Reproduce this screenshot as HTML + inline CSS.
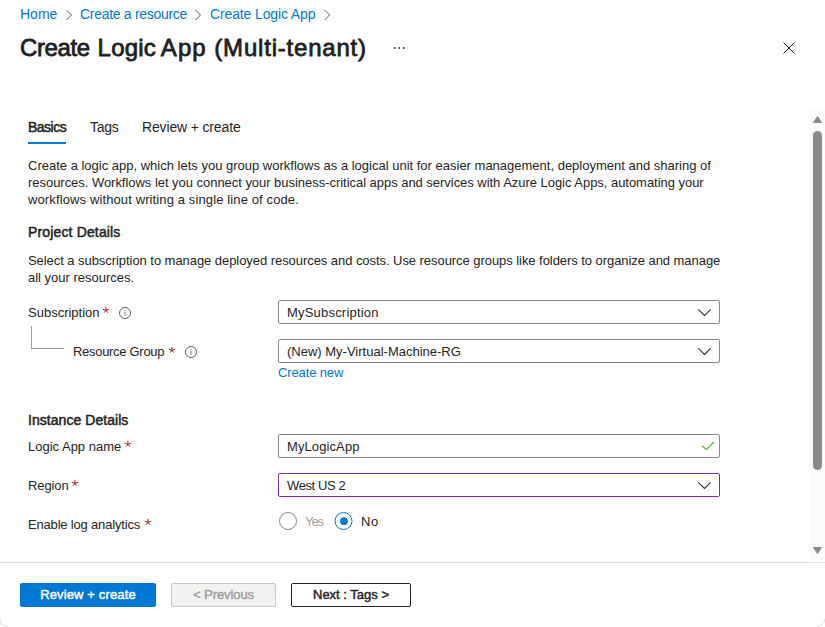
<!DOCTYPE html>
<html><head><meta charset="utf-8">
<style>
*{margin:0;padding:0;box-sizing:border-box}
html,body{width:825px;height:627px;overflow:hidden;background:#fff}
body{font-family:"Liberation Sans",sans-serif;color:#252423;position:relative}
.a{position:absolute;white-space:nowrap}
svg.a{overflow:visible}
.bc{font-size:14px;color:#0078d4;top:5px;line-height:18px}
.title{top:33px;font-size:24px;-webkit-text-stroke:0.8px #201f1e;color:#201f1e;line-height:30px;letter-spacing:0.47px}
.tab{top:118px;font-size:14px;line-height:18px;color:#252423}
.p{font-size:13px;line-height:17px;color:#252423}
.h{font-size:14px;-webkit-text-stroke:0.5px #252423;color:#252423;line-height:18px;letter-spacing:0.15px}
.lbl{font-size:13px;line-height:17px;color:#252423}
.box{position:absolute;left:278px;width:442px;height:24px;border:1px solid #8a8886;border-radius:2px;background:#fff}
.box span{position:absolute;left:8px;top:3px;font-size:13px;line-height:17px;color:#252423;white-space:nowrap}
.btn{position:absolute;top:583px;height:24px;border-radius:2px;font-size:13px;-webkit-text-stroke:0.45px currentColor;text-align:center;line-height:24px;white-space:nowrap}
</style></head><body>
<!-- breadcrumb -->
<div class="a bc" style="left:20px">Home</div>
<svg class="a" style="left:0;top:0" width="1" height="1"><path d="M66.5 10 L71.5 15 L66.5 20" fill="none" stroke="#605e5c" stroke-width="1"/></svg>
<div class="a bc" style="left:80px;letter-spacing:-0.3px">Create a resource</div>
<svg class="a" style="left:0;top:0" width="1" height="1"><path d="M195.5 10 L200.5 15 L195.5 20" fill="none" stroke="#605e5c" stroke-width="1"/></svg>
<div class="a bc" style="left:210px;letter-spacing:-0.13px">Create Logic App</div>
<svg class="a" style="left:0;top:0" width="1" height="1"><path d="M324.5 10 L329.5 15 L324.5 20" fill="none" stroke="#605e5c" stroke-width="1"/></svg>

<div class="a title" style="left:20px;letter-spacing:-0.4px">Create</div><div class="a title" style="left:97.6px;letter-spacing:0.2px">Logic</div><div class="a title" style="left:160.8px;letter-spacing:1.1px">App</div><div class="a title" style="left:214.3px;letter-spacing:0.8px">(Multi-tenant)</div>
<svg class="a" style="left:0;top:0" width="1" height="1"><g fill="#3b3a39"><rect x="394" y="47" width="1.4" height="2"/><rect x="398.5" y="47" width="1.4" height="2"/><rect x="403" y="47" width="1.4" height="2"/></g></svg>
<svg class="a" style="left:0;top:0" width="1" height="1"><path d="M783.5 42.5 L794.5 53.5 M794.5 42.5 L783.5 53.5" fill="none" stroke="#252423" stroke-width="1"/></svg>

<!-- tabs -->
<div class="a tab" style="left:28px;-webkit-text-stroke:0.5px #252423;letter-spacing:-0.5px">Basics</div>
<div class="a" style="left:28px;top:142px;width:38px;height:2px;background:#0078d4"></div>
<div class="a tab" style="left:90px;letter-spacing:-0.3px">Tags</div>
<div class="a tab" style="left:142px;letter-spacing:-0.15px">Review + create</div>

<!-- scrollbar -->
<div class="a" style="left:810px;top:108px;width:15px;height:453px;background:#fbfbfb"></div>
<svg class="a" style="left:0;top:0" width="1" height="1"><path d="M817.5 116.5 L821.5 122.5 L813.5 122.5 Z" fill="#8a8a8a" stroke="#8a8a8a" stroke-width="1" stroke-linejoin="round"/>
<path d="M813.5 547.5 L821.5 547.5 L817.5 553.5 Z" fill="#8a8a8a" stroke="#8a8a8a" stroke-width="1" stroke-linejoin="round"/></svg>
<div class="a" style="left:813px;top:131px;width:9px;height:339px;border-radius:4.5px;background:#8a8a8a"></div>

<!-- description -->
<div class="a p" style="left:28px;top:157px">Create a logic app, which lets you group workflows as a logical unit for easier management, deployment and sharing of</div>
<div class="a p" style="left:28px;top:174px;letter-spacing:-0.035px">resources. Workflows let you connect your business-critical apps and services with Azure Logic Apps, automating your</div>
<div class="a p" style="left:28px;top:191px;letter-spacing:0.12px">workflows without writing a single line of code.</div>

<div class="a h" style="left:28px;top:223px">Project Details</div>
<div class="a p" style="left:28px;top:252px;letter-spacing:-0.056px">Select a subscription to manage deployed resources and costs. Use resource groups like folders to organize and manage</div>
<div class="a p" style="left:28px;top:269px">all your resources.</div>

<!-- subscription -->
<div class="a lbl" style="left:28px;top:304px">Subscription</div>
<svg class="a" style="left:0;top:0" width="1" height="1"><g stroke="#a4262c" stroke-width="1" stroke-linecap="round"><line x1="105.9" y1="310.3" x2="105.9" y2="307.2"/><line x1="105.9" y1="310.3" x2="103.0" y2="309.4"/><line x1="105.9" y1="310.3" x2="108.8" y2="309.4"/><line x1="105.9" y1="310.3" x2="104.3" y2="312.4"/><line x1="105.9" y1="310.3" x2="107.5" y2="312.4"/></g></svg>
<svg class="a" style="left:0;top:0" width="1" height="1"><circle cx="125" cy="313" r="5.5" fill="none" stroke="#605e5c" stroke-width="1"/><path d="M125 311.8 V315.8" stroke="#797775" stroke-width="1"/><rect x="124.5" y="310" width="1" height="1" fill="#797775"/></svg>
<div class="box" style="top:300px"><span style="letter-spacing:0.2px">MySubscription</span></div>
<svg class="a" style="left:0;top:0" width="1" height="1"><path d="M698.3 309.3 L704.5 315.5 L710.7 309.3" fill="none" stroke="#323130" stroke-width="1.15"/></svg>

<!-- tree connector -->
<div class="a" style="left:31px;top:326px;width:1px;height:23px;background:#a19f9d"></div>
<div class="a" style="left:31px;top:348px;width:33px;height:1px;background:#a19f9d"></div>

<!-- resource group -->
<div class="a lbl" style="left:73px;top:343px;letter-spacing:-0.3px">Resource Group</div>
<svg class="a" style="left:0;top:0" width="1" height="1"><g stroke="#a4262c" stroke-width="1" stroke-linecap="round"><line x1="171.9" y1="350.3" x2="171.9" y2="347.2"/><line x1="171.9" y1="350.3" x2="169.0" y2="349.4"/><line x1="171.9" y1="350.3" x2="174.8" y2="349.4"/><line x1="171.9" y1="350.3" x2="170.3" y2="352.4"/><line x1="171.9" y1="350.3" x2="173.5" y2="352.4"/></g></svg>
<svg class="a" style="left:0;top:0" width="1" height="1"><circle cx="191" cy="352" r="5.5" fill="none" stroke="#605e5c" stroke-width="1"/><path d="M191 350.8 V354.8" stroke="#797775" stroke-width="1"/><rect x="190.5" y="349" width="1" height="1" fill="#797775"/></svg>
<div class="box" style="top:339px"><span>(New) My-Virtual-Machine-RG</span></div>
<svg class="a" style="left:0;top:0" width="1" height="1"><path d="M698.3 348.3 L704.5 354.5 L710.7 348.3" fill="none" stroke="#323130" stroke-width="1.15"/></svg>
<div class="a" style="left:278px;top:364px;font-size:13px;line-height:17px;color:#0078d4;letter-spacing:-0.13px">Create new</div>

<!-- instance details -->
<div class="a h" style="left:28px;top:411px;letter-spacing:0.05px">Instance Details</div>
<div class="a lbl" style="left:28px;top:438px">Logic App name</div>
<svg class="a" style="left:0;top:0" width="1" height="1"><g stroke="#a4262c" stroke-width="1" stroke-linecap="round"><line x1="127.9" y1="444.3" x2="127.9" y2="441.2"/><line x1="127.9" y1="444.3" x2="125.0" y2="443.4"/><line x1="127.9" y1="444.3" x2="130.8" y2="443.4"/><line x1="127.9" y1="444.3" x2="126.3" y2="446.4"/><line x1="127.9" y1="444.3" x2="129.5" y2="446.4"/></g></svg>
<div class="box" style="top:434px"><span style="letter-spacing:0.1px">MyLogicApp</span></div>
<svg class="a" style="left:0;top:0" width="1" height="1"><path d="M702.3 446 L706.3 449.6 L713.7 442.2" fill="none" stroke="#64b32e" stroke-width="1.25" stroke-linecap="round" stroke-linejoin="round"/></svg>

<div class="a lbl" style="left:28px;top:477px;letter-spacing:-0.1px">Region</div>
<svg class="a" style="left:0;top:0" width="1" height="1"><g stroke="#a4262c" stroke-width="1" stroke-linecap="round"><line x1="74.9" y1="483.3" x2="74.9" y2="480.2"/><line x1="74.9" y1="483.3" x2="72.0" y2="482.4"/><line x1="74.9" y1="483.3" x2="77.8" y2="482.4"/><line x1="74.9" y1="483.3" x2="73.3" y2="485.4"/><line x1="74.9" y1="483.3" x2="76.5" y2="485.4"/></g></svg>
<div class="box" style="top:473px;border-color:#8a2ba6"><span style="letter-spacing:-0.4px">West US 2</span></div>
<svg class="a" style="left:0;top:0" width="1" height="1"><path d="M698.3 482.3 L704.5 488.5 L710.7 482.3" fill="none" stroke="#323130" stroke-width="1.15"/></svg>

<div class="a lbl" style="left:28px;top:516px;letter-spacing:-0.18px">Enable log analytics</div>
<svg class="a" style="left:0;top:0" width="1" height="1"><g stroke="#a4262c" stroke-width="1" stroke-linecap="round"><line x1="147.9" y1="522.3" x2="147.9" y2="519.2"/><line x1="147.9" y1="522.3" x2="145.0" y2="521.4"/><line x1="147.9" y1="522.3" x2="150.8" y2="521.4"/><line x1="147.9" y1="522.3" x2="146.3" y2="524.4"/><line x1="147.9" y1="522.3" x2="149.5" y2="524.4"/></g></svg>

<!-- radios -->
<svg class="a" style="left:0;top:0" width="1" height="1"><circle cx="288" cy="521" r="8.5" fill="#fff" stroke="#8a8886" stroke-width="1"/>
<circle cx="343.5" cy="521" r="8.5" fill="#fff" stroke="#0078d4" stroke-width="1"/><circle cx="344" cy="521.2" r="3.9" fill="#0078d4"/></svg>
<div class="a lbl" style="left:305px;top:513px;color:#a19f9d;letter-spacing:-1.1px">Yes</div>
<div class="a lbl" style="left:361px;top:513px;letter-spacing:0.5px">No</div>

<!-- footer -->
<div class="a" style="left:0;top:562px;width:825px;height:1px;background:#e1dfdd"></div>
<div class="btn" style="left:20px;width:136px;background:#0078d4;color:#fff;letter-spacing:0.14px">Review + create</div>
<div class="btn" style="left:171px;width:105px;background:#f3f2f1;border:1px solid #c8c6c4;color:#a19f9d;line-height:22px;letter-spacing:-0.09px">&lt; Previous</div>
<div class="btn" style="left:291px;width:120px;border:1px solid #252423;color:#252423;line-height:22px">Next : Tags &gt;</div>

<!-- window corners -->
<svg class="a" style="left:0;top:0" width="1" height="1"><path d="M0.3 619 Q0.3 626.7 8 626.7" fill="none" stroke="#e2e2e2" stroke-width="1"/><path d="M824.7 619 Q824.7 626.7 817 626.7" fill="none" stroke="#e2e2e2" stroke-width="1"/></svg>
</body></html>
